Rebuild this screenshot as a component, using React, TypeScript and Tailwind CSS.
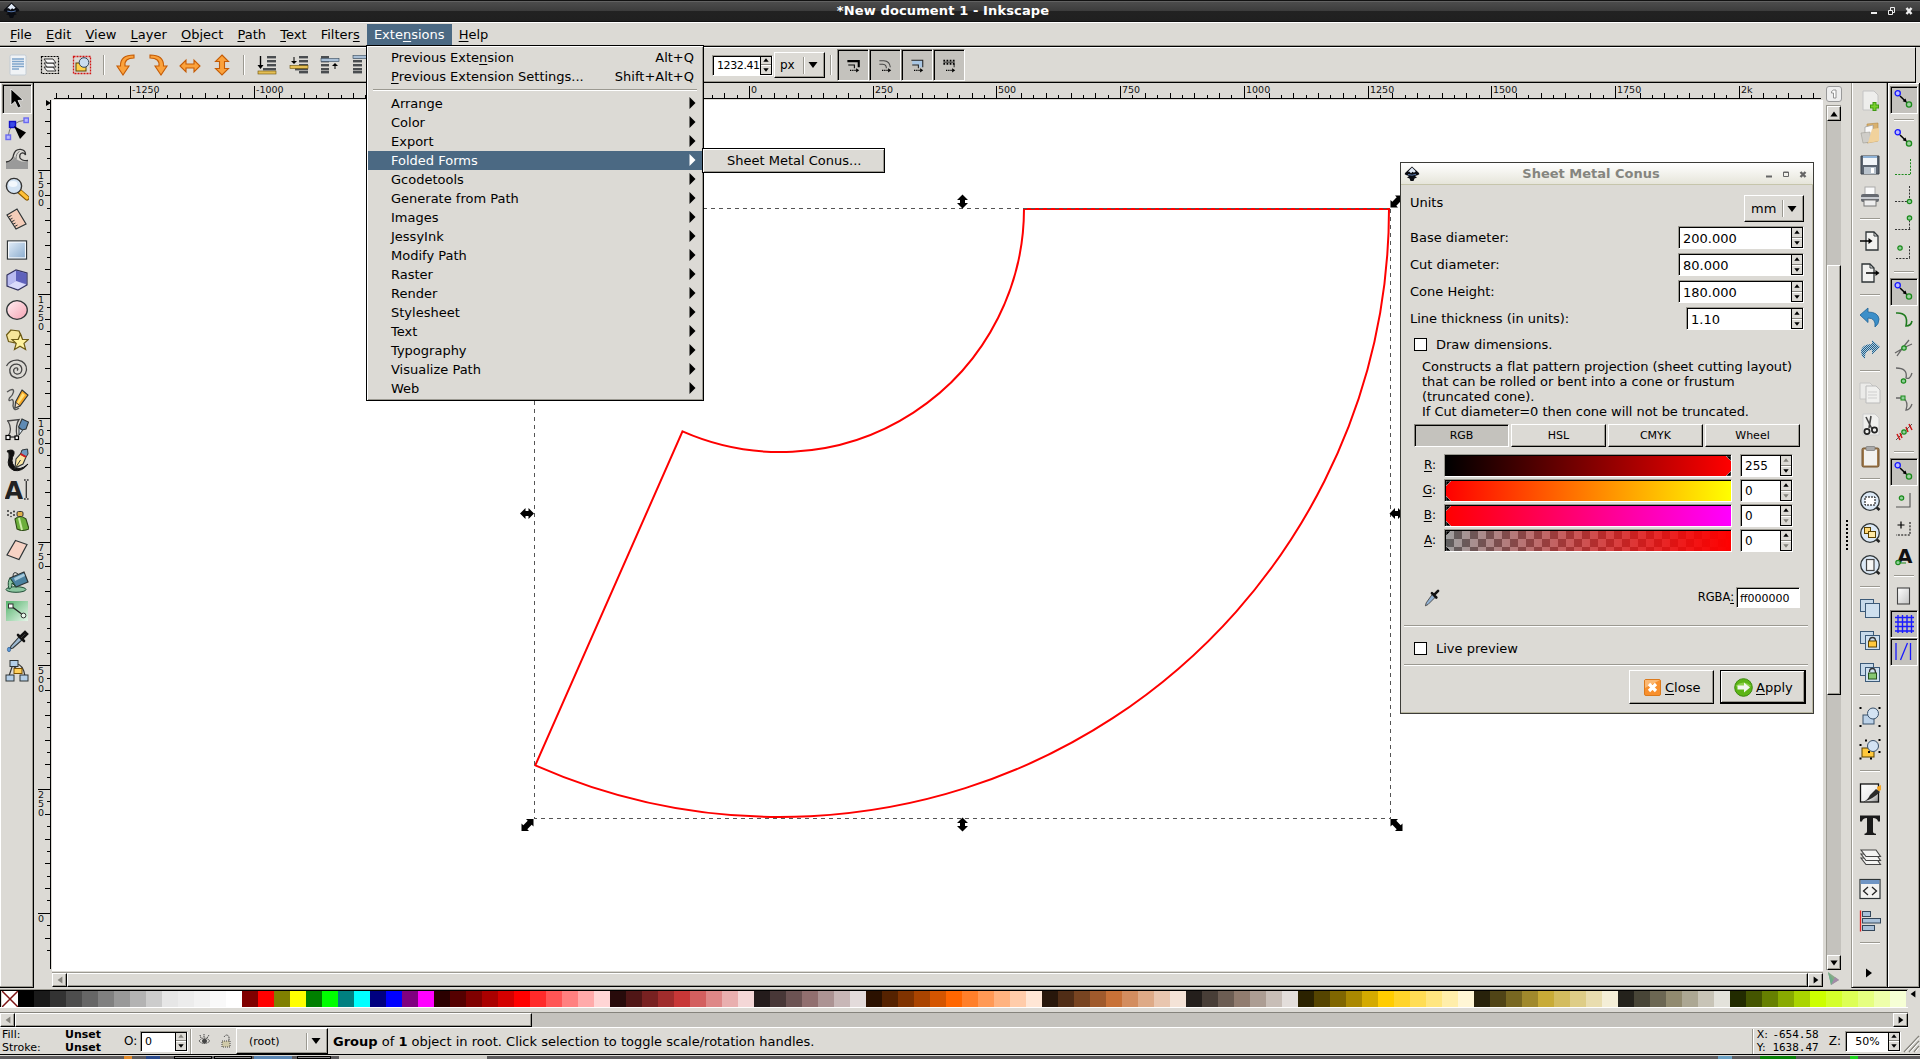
import React from "react";

type Kids = { children?: React.ReactNode };

/* ---------- shared widgets ---------- */

const raised =
  "border border-t-white border-l-white border-b-black border-r-black shadow-[inset_-1px_-1px_0_#9b9991] bg-[#dcdad5]";
const pressed =
  "border border-t-[#85837c] border-l-[#85837c] border-b-white border-r-white shadow-[inset_1px_1px_0_#000] bg-[#c4c2bd]";

function Mn({ t }: { t: string }) {
  const i = t.indexOf("_");
  if (i < 0) return <>{t}</>;
  return (
    <>
      {t.slice(0, i)}
      <span className="underline underline-offset-2 [text-decoration-skip-ink:none] decoration-1">{t[i + 1]}</span>
      {t.slice(i + 2)}
    </>
  );
}

function Tri({ dir, dim, s = 5 }: { dir: "u" | "d" | "l" | "r"; dim?: boolean; s?: number }) {
  const d = {
    u: "M5 2 L9.5 8 H0.5 Z",
    d: "M5 8 L9.5 2 H0.5 Z",
    l: "M2 5 L8 0.5 V9.5 Z",
    r: "M8 5 L2 0.5 V9.5 Z",
  }[dir];
  return (
    <svg width={s} height={s} viewBox="0 0 10 10" className="block shrink-0">
      <path d={d} fill={dim ? "#85837c" : "#000"} />
    </svg>
  );
}

function Spin({
  value,
  cls,
  dimUp,
  dimDown,
  center,
}: {
  value: string;
  cls: string;
  dimUp?: boolean;
  dimDown?: boolean;
  center?: boolean;
}) {
  return (
    <div className={"border border-t-[#9b9991] border-l-[#9b9991] border-b-white border-r-white " + cls}>
      <div className="flex h-full border-t border-l border-black bg-white">
        <div className={"flex min-w-0 flex-1 items-center whitespace-nowrap " + (center ? "justify-center" : "pl-[3px]")}>
          {value}
        </div>
        <div className="flex w-[12px] shrink-0 flex-col border-x border-black bg-[#dcdad5]">
          <div className="flex flex-1 items-center justify-center border-b border-[#85837c]">
            <Tri dir="u" dim={dimUp} s={6} />
          </div>
          <div className="flex flex-1 items-center justify-center border-t border-b border-t-white border-b-black">
            <Tri dir="d" dim={dimDown} s={6} />
          </div>
        </div>
      </div>
    </div>
  );
}

function Combo({ value, cls }: { value: string; cls: string }) {
  return (
    <div className={"flex items-center " + raised + " " + cls}>
      <span className="flex-1 leading-none">{value}</span>
      <span className="mr-[3px] h-[17px] w-[2px] border-l border-r border-l-[#9b9991] border-r-white" />
      <span className="mr-[6px]">
        <Tri dir="d" s={10} />
      </span>
    </div>
  );
}

function Logo({ s }: { s: number }) {
  return (
    <svg width={s} height={s} viewBox="0 0 16 16" className="block shrink-0">
      <path d="M8 0.5 L15 7 Q16 8.6 14 9 L11 10 L13 11.5 L10.5 12.5 L9.5 15 L6.5 15 L5.5 12.5 L3 11.5 L5 10 L2 9 Q0 8.6 1 7 Z" fill="#0a0c12" />
      <path d="M8 1.6 L11.8 5.3 L10 6.8 L8.6 5.8 L7 7.2 L5.6 5.8 L4 5.8 Z" fill="#dfe8f5" />
      <path d="M4 8.5 Q8 10 12 8.3" stroke="#5575a8" fill="none" />
    </svg>
  );
}

function Svg({ children, s = 24 }: Kids & { s?: number }) {
  return (
    <svg width={s} height={s} viewBox="0 0 24 24" fill="none" className="block shrink-0">
      {children}
    </svg>
  );
}

/* ---------- toolbox drawings ---------- */

const K = "#2e3436";
const toolIcons: React.ReactNode[] = [
  <path d="M6 2 L6 18 L10 14.5 L13 21 L16 19.5 L13 13.5 L18 13 Z" fill="#000" stroke="#fff" strokeWidth=".7" />,
  <>
    <path d="M3 20 Q4 4 22 3" stroke="#777" />
    <rect x="1" y="18" width="4.5" height="4.5" fill="#b8b8ff" stroke="#6a6af0" strokeWidth="1.4" />
    <rect x="19" y="1" width="4.5" height="4.5" fill="#b8b8ff" stroke="#6a6af0" strokeWidth="1.4" />
    <rect x="4.5" y="4.5" width="6" height="6" fill="#3a4ae8" stroke="#1212c8" strokeWidth="1.4" />
    <path d="M9 9 L21 15.5 L15 22 Z" fill="#000" />
  </>,
  <>
    <path d="M1 22 V15 Q9 15 9 9 Q10 12 15 14 Q18 15 23 14 V22 Z" fill="#9a9a9a" />
    <path d="M1 15 Q8 14 8.5 8 Q10 2 15.5 2.3 Q21 3 20.5 8 Q19.5 5.5 17 6 Q14 7 15 11 Q17 14 23 13.5" stroke="#333" strokeWidth="1.3" />
    <path d="M11 12 Q11 6 14.5 4.5" stroke="#777" />
  </>,
  <>
    <path d="M14 14 L22 21" stroke="#8a5a00" strokeWidth="5" strokeLinecap="round" />
    <path d="M15.5 15 L22 20.8" stroke="#ffc038" strokeWidth="3.2" strokeLinecap="round" />
    <circle cx="9" cy="9" r="7.6" fill="#d3e3f3" stroke="#333" strokeWidth="1.4" />
    <ellipse cx="8" cy="7" rx="4.5" ry="3" fill="#f3f8fd" />
  </>,
  <>
    <path d="M2 8 L12 2 L21 17 L11 22 Z" fill="#f4cdb9" stroke={K} strokeWidth="1.2" />
    <path d="M3.5 10 L6.5 8.5 M5 12.5 L7.5 11.2 M6.5 14.8 L9.5 13.3 M8 17.2 L10.5 16 M9.5 19.6 L12.5 18" stroke={K} />
  </>,
  <>
    <defs>
      <linearGradient id="gRect" x1="0" y1="0" x2="1" y2="1">
        <stop offset="0" stopColor="#e6f0fa" />
        <stop offset="1" stopColor="#86a9cc" />
      </linearGradient>
    </defs>
    <rect x="2.5" y="3" width="19" height="18" fill="url(#gRect)" stroke={K} strokeWidth="1.3" />
    <rect x="3.6" y="4.1" width="16.8" height="15.8" stroke="#fff" />
  </>,
  <>
    <path d="M2 7 L11 2 L22 5 V17 L13 22 L2 18 Z" fill="#8d8fd6" stroke="#34345e" strokeWidth="1.2" />
    <path d="M2.8 7.4 L11 2.8 V13 L2.8 17.4 Z" fill="#b9bbf0" />
    <path d="M11 2.8 L21.3 5.6 V16 L11 13 Z" fill="#5f62bb" />
    <path d="M11 13 L21 16.6 L13 21.2 L3 17.8 Z" fill="#d9dafa" />
  </>,
  <>
    <defs>
      <linearGradient id="gEl" x1="0" y1="0" x2="1" y2="1">
        <stop offset="0" stopColor="#fff0f3" />
        <stop offset="1" stopColor="#f5a3b3" />
      </linearGradient>
    </defs>
    <ellipse cx="12" cy="12" rx="10.3" ry="9.3" fill="url(#gEl)" stroke={K} strokeWidth="1.3" />
  </>,
  <>
    <path d="M6 2 L14 3 L16.5 9 L11 15 L3.5 13.5 L1.5 7 Z" fill="#f7e69b" stroke="#6d5b16" strokeWidth="1.2" />
    <path d="M15.5 6 L17.5 11.3 L23.3 11.5 L19 15.4 L20.6 21.5 L15 18.2 L9.5 21.5 L11.2 15.4 L7 11.5 L13.2 11.3 Z" fill="#fff3a0" stroke="#6d5b16" strokeWidth="1.2" />
  </>,
  <path d="M12 12.5 Q13.5 11 12.2 10 Q10 9.3 8.8 11.5 Q8 15 11.5 16 Q16 16.5 16.8 12 Q17 7 12 6.2 Q6 6 4.8 11.5 Q4.3 18.5 11.5 20 Q20 20.5 21.5 12 Q21.8 4 13 2.2 Q5 1.6 1.5 8" stroke="#444" strokeWidth="1.3" />,
  <>
    <path d="M2 4 Q9 -1 8.5 4 Q8 7 4.5 10 Q2.5 14 7 11.5 Q9 12 8 18 Q9 24 14 20" stroke="#555" strokeWidth="1.4" />
    <path d="M17 2 L23 7 L15 18 L10 20 L10.5 14 Z" fill="#f6a623" stroke={K} strokeWidth="1.1" />
    <path d="M17.5 5 L20 7 L13.5 16 L12 14.5 Z" fill="#ffe07a" />
    <path d="M11 14.5 L14.8 17.6 L10 20 Z" fill="#f8e2c6" stroke={K} strokeWidth=".8" />
  </>,
  <>
    <path d="M2 3 L14 1.5 Q10 7 12 19 M3 3 Q8 12 3 18 M4 19 H14" stroke="#444" strokeWidth="1.3" />
    <rect x="1" y="17.5" width="4" height="4" fill="#fff" stroke="#000" strokeWidth="1.2" />
    <rect x="10" y="18" width="3.5" height="3.5" fill="#fff" stroke="#000" strokeWidth="1.2" />
    <path d="M17 1 L23.5 4 L21 11 L17 12 L13.5 9 Z" fill="#5f8bb4" stroke={K} strokeWidth="1.1" />
    <path d="M14 10 L17.5 12.5 L14 17 Z" fill="#dce8f2" stroke={K} />
  </>,
  <>
    <path d="M2 3 Q10 0 9 6 Q5 13 9 18 Q14 24 23 16 Q17 24 9 22.5 Q1 19 4 10 Q5 5 2 3 Z" fill="#111" stroke="#111" />
    <path d="M17 2 L22.5 1 L23 6 L21 9 L15.5 6 Z" fill="#6f98c0" stroke={K} />
    <path d="M15.5 6 L21 9 L18 16 L10 20 L11 11 Z" fill="#fbe7a2" stroke={K} strokeWidth="1.1" />
    <path d="M15.5 5.8 L21 9" stroke="#d02020" strokeWidth="2" />
    <path d="M11 19 L15.5 12" stroke={K} />
  </>,
  <>
    <text x="-.5" y="20.5" fontSize="24" fontWeight="bold" fontFamily="DejaVu Sans" fill="#222">A</text>
    <path d="M19 2 H20.7 M21.9 2 H23.6 M21.3 3 V20 M19 21 H20.7 M21.9 21 H23.6" stroke="#333" strokeWidth="1.3" />
  </>,
  <>
    <g fill="#333">
      <circle cx="3" cy="3" r="1" /><circle cx="6" cy="5" r="1" /><circle cx="3" cy="7" r="1" /><circle cx="9" cy="3.5" r="1" /><circle cx="9" cy="7" r="1" /><circle cx="6" cy="8.5" r=".8" />
    </g>
    <path d="M10 11 Q15 6 21 11 L24 21 Q18 24 12 21 Z" fill="#6cae3c" stroke="#2c4a14" strokeWidth="1.1" />
    <path d="M14 10 L17 22" stroke="#cdeaa8" strokeWidth="2" />
    <rect x="12" y="3.5" width="6" height="5" rx="1.5" fill="#e0b04a" stroke="#333" />
  </>,
  <path d="M10.5 2.5 L22 6.5 L14 21.5 L2 17 Z" fill="#f6d2c4" stroke={K} strokeWidth="1.2" />,
  <>
    <ellipse cx="11" cy="20.5" rx="10" ry="2.8" fill="#8cc6a0" stroke="#1f4d36" />
    <path d="M5 9 L19 3 L23 13 L11 18 Z" fill="#4b82a0" stroke={K} strokeWidth="1.2" />
    <path d="M9 9 L19 4.5 L20 7 L10 12 Z" fill="#a6cadd" />
    <path d="M5 9 Q2 13 4 20 Q7 20 7 14 L11 18 Z" fill="#8cc6a0" stroke="#1f4d36" />
    <path d="M8 8 Q8 1 13 5" stroke={K} />
  </>,
  <>
    <defs>
      <linearGradient id="gGr" x1="0" y1="0" x2="1" y2="1">
        <stop offset="0" stopColor="#56b36d" />
        <stop offset="1" stopColor="#e5f6e9" />
      </linearGradient>
    </defs>
    <rect x="1" y="2" width="22" height="20" fill="url(#gGr)" />
    <path d="M6 7 L18 16" stroke="#222" strokeWidth="1.3" />
    <rect x="3.5" y="5" width="4.5" height="4" fill="#fff" stroke="#333" />
    <circle cx="18.5" cy="16.5" r="2.4" fill="#e8f7eb" stroke="#333" />
  </>,
  <>
    <path d="M14 8 L17 11 L8 19 L5 20 L6 17 Z" fill="#9db8d0" stroke={K} strokeWidth="1.1" />
    <path d="M13 6 L19 12 M15 8 L20 3 L22 5 L17 10 Z" stroke="#111" strokeWidth="2.6" strokeLinecap="round" />
    <ellipse cx="4" cy="20.5" rx="1.6" ry="2.2" fill="#5b97d6" stroke="#2b5b90" strokeWidth=".7" />
  </>,
  <>
    <path d="M8 5 L4 17 M11 5 Q18 5 20 17 M8 7 L12 10" stroke="#333" strokeWidth="1.2" />
    <rect x="5" y="1.5" width="8" height="6" fill="#b4cfe8" stroke={K} />
    <rect x="1" y="16" width="8" height="6" fill="#b4cfe8" stroke={K} />
    <rect x="15" y="16" width="8" height="6" fill="#b4cfe8" stroke={K} />
    <rect x="9" y="9.5" width="8" height="5" fill="#ffcf5a" stroke="#7c5200" />
  </>,
];

/* ---------- command bar drawings ---------- */

const pageOut = <path d="M5 2 H16 L20 6 V21 H5 Z" fill="#eeeeec" stroke="#c4c4c4" />;
const twoRects = (
  <>
    <rect x="2.5" y="2.5" width="13" height="12" fill="#c8daea" stroke="#3c5a78" />
    <rect x="7.5" y="6.5" width="14" height="14" fill="#cfe0ef" stroke="#3c5a78" />
  </>
);
const zoomBase = (
  <>
    <path d="M17 17 L21.5 21" stroke="#222" strokeWidth="2.6" />
    <circle cx="12" cy="12" r="9.3" fill="#dce9f6" stroke={K} strokeWidth="1.3" />
  </>
);

const cmdGroups: React.ReactNode[][] = [
  [
    <>
      {pageOut}
      <path d="M16.5 13 V22 M12 17.5 H21" stroke="#3f9a10" strokeWidth="4" />
      <path d="M16.5 14 V21 M13 17.5 H20" stroke="#7ad02e" strokeWidth="2" />
    </>,
    <>
      <path d="M9 3 L20 2 V20 L9 22 Z" fill="#d9b16e" stroke="#b58a45" strokeWidth=".6" />
      <path d="M7 6 L15 4 V19 L7 21 Z" fill="#fafafa" stroke="#999" strokeWidth=".7" />
      <path d="M3 12 L12 11 L13 21 L5 22 Z" fill="#cfcdc8" stroke="#a09d96" strokeWidth=".6" />
      <path d="M14 8 L21 7 V20 L10 22 Z" fill="#f1d29c" />
    </>,
    <>
      <path d="M3 3 H21 V21 H3 Z" fill="#5b6470" stroke="#3b424c" />
      <rect x="5" y="3" width="14" height="9" fill="#f2f5f8" />
      <rect x="5" y="3" width="14" height="2" fill="#8fb2d6" />
      <rect x="6" y="14" width="12" height="7" fill="#b9c3cd" />
      <rect x="13" y="15" width="3" height="5" fill="#fff" />
    </>,
    <>
      <rect x="7" y="2" width="10" height="9" fill="#fafafa" stroke="#aaa" />
      <rect x="3" y="9" width="18" height="8" rx="2" fill="#666a70" />
      <rect x="3" y="12" width="18" height="2" fill="#c8cbd0" />
      <rect x="6" y="15" width="12" height="6" fill="#eee" stroke="#777" />
    </>,
  ],
  [
    <>
      <path d="M8 3 H16 L20 7 V21 H8 Z" fill="#f2f2f0" stroke={K} strokeWidth="1.3" />
      <path d="M16 3 V7 H20" stroke={K} />
      <path d="M2 12 H12" stroke="#000" strokeWidth="1.5" />
      <path d="M10.5 9 L14.5 12 L10.5 15 Z" fill="#000" />
    </>,
    <>
      <path d="M4 3 H12 L16 7 V21 H4 Z" fill="#f2f2f0" stroke={K} strokeWidth="1.3" />
      <path d="M12 3 V7 H16" stroke={K} />
      <path d="M8 12 H18" stroke="#000" strokeWidth="1.5" />
      <path d="M17.5 9 L21.5 12 L17.5 15 Z" fill="#000" />
    </>,
  ],
  [
    <path d="M2 10 L10 3 V7 Q20 7 21 14 Q21 19 17 22 Q18 13 10 13 V17.5 Z" fill="#3c8fc9" stroke="#1f6296" strokeWidth=".8" />,
    <>
      <defs>
        <pattern id="dith" width="2" height="2" patternUnits="userSpaceOnUse">
          <rect width="1" height="1" fill="#275f86" />
          <rect x="1" y="1" width="1" height="1" fill="#275f86" />
          <rect x="1" width="1" height="1" fill="#a9cbe0" />
          <rect y="1" width="1" height="1" fill="#a9cbe0" />
        </pattern>
      </defs>
      <path d="M22 10 L14 3 V7 Q4 7 3 14 Q3 19 7 22 Q6 13 14 13 V17.5 Z" fill="url(#dith)" />
    </>,
  ],
  [
    <>
      <path d="M2 2 H12 L15 5 V18 H2 Z" fill="#ebebe9" stroke="#c6c6c4" />
      <path d="M8 5 H18 L22 9 V22 H8 Z" fill="#f0f0ee" stroke="#bbb" />
      <path d="M10 11 H19 M10 14 H19 M10 17 H19" stroke="#cfcfcf" />
    </>,
    <>
      <path d="M5 1 H17 L21 5 V22 H5 Z" fill="#f0f0ee" stroke="#ccc" />
      <path d="M8 4 L14 16 M13 3 L11 15" stroke="#444" strokeWidth="1.6" />
      <circle cx="9" cy="18.5" r="2.6" stroke="#222" strokeWidth="1.7" />
      <circle cx="16.5" cy="17" r="2.6" stroke="#222" strokeWidth="1.7" />
    </>,
    <>
      <rect x="4" y="3" width="17" height="19" rx="1.5" fill="#a17b4d" stroke="#70532f" />
      <rect x="6" y="4.5" width="13" height="16" fill="#f2f2f0" />
      <rect x="8" y="1.5" width="9" height="4" rx="1" fill="#aaa" stroke="#777" strokeWidth=".7" />
    </>,
  ],
  [
    <>
      {zoomBase}
      <rect x="7" y="8" width="10" height="8" stroke="#000" strokeDasharray="2 1" fill="#fff" />
    </>,
    <>
      {zoomBase}
      <rect x="6.5" y="6.5" width="6" height="6" fill="#ffd977" stroke="#5b4200" />
      <rect x="10.5" y="10.5" width="7" height="6" fill="#ffe9a5" stroke="#5b4200" />
    </>,
    <>
      {zoomBase}
      <rect x="8.5" y="6.5" width="7.5" height="11" fill="#f7f7f5" stroke="#444" strokeWidth="1.2" />
    </>,
  ],
  [
    twoRects,
    <>
      {twoRects}
      <path d="M11.5 12 Q11.5 8.5 14.5 8.5 Q17.5 8.5 17.5 12" stroke="#333" strokeWidth="1.3" />
      <rect x="10.5" y="12" width="8" height="6" fill="#ffc83c" stroke="#5b4200" />
    </>,
    <>
      {twoRects}
      <path d="M11.5 11 Q11.5 7.5 14.5 7.5 Q17.5 7.5 17.5 12" stroke="#333" strokeWidth="1.3" />
      <rect x="10.5" y="12" width="8" height="6" fill="#86c770" stroke="#25501a" />
    </>,
  ],
  [
    <>
      <rect x="5" y="10" width="11" height="9" fill="#bcd2e8" stroke="#38506a" />
      <circle cx="15" cy="8.5" r="5.5" fill="#d3e3f3" stroke="#38506a" />
      <path d="M1.5 2 H3.5 V4 H1.5Z M20.5 2 H22.5 V4 H20.5Z M1.5 20 H3.5 V22 H1.5Z M20.5 20 H22.5 V22 H20.5Z" fill="#000" />
    </>,
    <>
      <rect x="4" y="11" width="12" height="9" fill="#ffc83c" stroke="#5b4200" />
      <circle cx="15" cy="9" r="5.5" fill="#d3e3f3" stroke="#38506a" />
      <path d="M1.5 7 H3.5 V9 H1.5Z M7 2.5 H9 V4.5 H7Z M20.5 2 H22.5 V4 H20.5Z M1.5 20.5 H3.5 V22.5 H1.5Z M10 14 H12 V16 H10Z M20.5 14 H22.5 V16 H20.5Z M12 20.5 H14 V22.5 H12Z" fill="#000" />
    </>,
  ],
  [
    <>
      <defs>
        <linearGradient id="gFs" x1="0" y1="0" x2="1" y2="1">
          <stop offset="0" stopColor="#fff" />
          <stop offset=".6" stopColor="#eee" />
          <stop offset="1" stopColor="#888" />
        </linearGradient>
      </defs>
      <rect x="2.5" y="3" width="18" height="18" fill="url(#gFs)" stroke="#111" strokeWidth="1.3" />
      <path d="M19 6 L23 4 V9 L20 11 Z" fill="#f5a623" />
      <path d="M18 8 L22 11 Q15 18 5 21 Q10 19 12 14 Z" fill="#2a2a2a" />
    </>,
    <path d="M2 2.5 H22 V8.5 H20 Q19.5 5 15 5 V18.5 Q15 20.5 18 20.8 V22 H6.5 V20.8 Q9 20.5 9 18.5 V5 Q4.5 5 4 8.5 H2 Z" fill="#1a1a1a" />,
    <g stroke="#444" strokeWidth="1.1" fill="#f4f4f2">
      <path d="M3 13 H18 L22.5 19.5 H8 Z" />
      <path d="M3 9 H18 L22.5 15.5 H8 Z" />
      <path d="M3 5 H18 L22.5 11.5 H8 Z" />
    </g>,
    <>
      <rect x="2" y="2.5" width="20" height="19" fill="#f2f2f0" stroke={K} strokeWidth="1.2" />
      <rect x="2.6" y="3" width="18.8" height="4" fill="#6f95c4" />
      <path d="M10 10 L5.5 14 L10 18 M14 10 L18.5 14 L14 18" stroke="#222" strokeWidth="1.3" />
    </>,
    <>
      <path d="M2.5 1.5 V22.5" stroke="#e02020" strokeWidth="1.3" />
      <rect x="4.5" y="2.5" width="8" height="5" fill="#a9c0d8" stroke="#33465a" />
      <rect x="4.5" y="9.5" width="18" height="4.5" fill="#a9c0d8" stroke="#33465a" />
      <rect x="4.5" y="16.5" width="12" height="5" fill="#a9c0d8" stroke="#33465a" />
    </>,
  ],
];

/* ---------- snap bar drawings ---------- */

const G = "#1b8a1b";
const snapMain = (
  <>
    <circle cx="5.7" cy="5.3" r="2.6" fill="#b9b9ff" stroke="#1515ff" strokeWidth="1.3" />
    <circle cx="17" cy="16.5" r="2.6" fill="#9fd0a0" stroke={G} strokeWidth="1.3" />
    <path d="M8 8 L13 12.8" stroke="#000" strokeWidth="1.5" />
    <path d="M15 14.8 L10.7 13.3 L13.5 10.6 Z" fill="#000" />
  </>
);
const dotN = (x: number, y: number) => <circle cx={x} cy={y} r="2.2" fill="#8fd09a" stroke={G} strokeWidth="1.2" />;
const snapGroups: { on?: boolean; g: React.ReactNode }[][] = [
  [{ on: true, g: snapMain }],
  [
    { g: snapMain },
    { g: <path d="M18.5 4 V19 M3 19.5 H19" stroke={G} strokeDasharray="2 1.3" /> },
    { g: <><path d="M17.5 3 V19 M3 18.5 H19" stroke="#333" strokeDasharray="2 1.3" />{dotN(17.5, 18.5)}</> },
    { g: <><path d="M17.5 6 V19 M3 18.5 H19" stroke="#333" strokeDasharray="2 1.3" />{dotN(17.5, 7)}</> },
    { g: <><path d="M17.5 7 V20 M4 19.5 H18" stroke="#333" strokeDasharray="2 1.3" />{dotN(8, 9)}</> },
  ],
  [
    { on: true, g: snapMain },
    { g: <path d="M4 5 Q17 4 14 18 Q19 18 20 13" stroke="#1f7a1f" strokeWidth="1.6" /> },
    { g: <><path d="M3 17 Q12 11 20 8 M5 20 Q10 12 17 4" stroke="#666" strokeWidth="1.3" />{dotN(12, 12)}</> },
    { g: <><path d="M4 4 Q16 4 14 14 Q18 16 20 9" stroke="#666" strokeWidth="1.3" />{dotN(11.5, 17)}</> },
    { g: <><path d="M4 6 H11 Q17 10 14 18 Q18 18 20 12" stroke="#666" strokeWidth="1.3" /><rect x="9" y="4" width="4" height="4" fill="#8fd09a" stroke={G} /></> },
    { g: <><path d="M4 20 L20 4" stroke="#555" /><path d="M5 14 L8 20 M8 13 L10 18 M14 7 L16 12 M17 4 L20 10" stroke="#cc1818" strokeWidth="1.5" />{dotN(12, 12)}</> },
  ],
  [
    { on: true, g: snapMain },
    { g: <><path d="M18 5 V19 H4" stroke="#555" strokeWidth="1.1" />{dotN(9.5, 10)}</> },
    { g: <><path d="M18 6 V19 H4" stroke="#000" strokeDasharray="2 1.3" /><path d="M9 5.5 V12.5 M5.5 9 H12.5" stroke="#000" strokeWidth="1.2" /></> },
    { g: <><text x="5" y="18.5" fontSize="20" fontWeight="bold" fontFamily="DejaVu Sans" fill="#111">A</text><path d="M4 19 H14" stroke={G} />{dotN(6, 18.5)}</> },
  ],
  [
    { g: <><defs><linearGradient id="gPg" x1="0" y1="0" x2="1" y2="1"><stop offset="0" stopColor="#fff" /><stop offset="1" stopColor="#c4c4c4" /></linearGradient></defs><rect x="5.5" y="4" width="12" height="16" fill="url(#gPg)" stroke="#444" strokeWidth="1.1" /></> },
    { on: true, g: <path d="M6 3 V21 M10.5 3 V21 M15 3 V21 M19.5 3 V21 M3 5.5 H22 M3 10 H22 M3 14.5 H22 M3 19 H22" stroke="#1a1aff" strokeWidth="1.4" /> },
    { on: true, g: <path d="M4 3 V20 M18.5 3 V20 M8.5 20 L15.5 3" stroke="#1a1aff" strokeWidth="1.3" /> },
  ],
];
const snapGap = ["", "h-[11px]", "h-[13px]", "h-[12px]", "h-[11.6px]"];

/* ---------- option bar drawings ---------- */

const arrowFill = { fill: "#fba23c", stroke: "#c55c06", strokeWidth: 1.1 };
const levelIcon = (mode: number) => (
  <>
    {[2, 6, 10, 14].map((y, i) => (
      <rect key={y} x={mode < 2 ? 13 - (i === 3 ? 4 : 0) : 3} y={y + 1} width={mode < 2 ? 9 + (i === 3 ? 4 : 0) : mode === 2 ? 8 : 9} height="2.4" fill="#4a4d50" />
    ))}
    {mode === 0 && (<><rect x="4" y="18" width="18" height="3" fill="#e5bf55" stroke="#6b5208" strokeWidth=".6" /><path d="M6.5 3 V13" stroke="#000" strokeWidth="1.4" /><path d="M3.5 12 H9.5 L6.5 16 Z" fill="#000" /></>)}
    {mode === 1 && (<><rect x="4" y="12.5" width="18" height="3" fill="#e5bf55" stroke="#6b5208" strokeWidth=".6" /><rect x="13" y="18" width="9" height="2.4" fill="#4a4d50" /><path d="M8 4 V9" stroke="#000" /><path d="M5 8 H11 L8 11 Z" fill="#000" /></>)}
    {mode === 2 && (<><rect x="3" y="5.5" width="18" height="3" fill="#a9bfd6" stroke="#33465a" strokeWidth=".6" /><rect x="3" y="18" width="8" height="2.4" fill="#4a4d50" /><path d="M17 16 V12" stroke="#000" /><path d="M14 13 H20 L17 10 Z" fill="#000" /></>)}
    {mode === 3 && (<><rect x="3" y="2.5" width="18" height="3" fill="#a9bfd6" stroke="#33465a" strokeWidth=".6" /><rect x="3" y="18" width="9" height="2.4" fill="#4a4d50" /></>)}
  </>
);

const optGroups: React.ReactNode[][] = [
  [
    <>
      <rect x="4" y="2" width="16" height="20" rx="1.5" fill="#f0f3f6" stroke="#c3ccd5" />
      <path d="M6 6 H18 M6 8.5 H18 M6 11 H18 M6 13.5 H18 M6 16 H13" stroke="#7fa5cb" strokeWidth="1.6" />
    </>,
    <>
      <rect x="3.5" y="3.5" width="17" height="17" fill="none" stroke="#000" strokeDasharray="2 1" strokeWidth="1.2" />
      <g stroke="#333" fill="#fafafa"><path d="M6 14 H15 L18 18 H9 Z" /><path d="M6 10 H15 L18 14 H9 Z" /><path d="M6 6 H15 L18 10 H9 Z" /></g>
    </>,
    <>
      <rect x="3.5" y="3.5" width="17" height="17" stroke="#d21414" strokeDasharray="2 1" strokeWidth="1.3" />
      <rect x="6" y="10" width="10" height="8" fill="#ffd24a" stroke="#5b4200" />
      <circle cx="14" cy="9.5" r="4.8" fill="#c9dcef" stroke="#33465a" />
    </>,
  ],
  [
    <path d="M20 2 Q6 2 6.5 13 H3 L9 22 L15 13 H11 Q10 5 20 5 Z" {...arrowFill} />,
    <path d="M4 2 Q18 2 17.5 13 H21 L15 22 L9 13 H13 Q14 5 4 5 Z" {...arrowFill} />,
    <path d="M2 13 L8 7 V11 H16 V7 L22 13 L16 19 V15 H8 V19 Z" {...arrowFill} />,
    <path d="M12 2 L18.5 8.5 H14.5 V15.5 H18.5 L12 22 L5.5 15.5 H9.5 V8.5 H5.5 Z" {...arrowFill} />,
  ],
  [levelIcon(0), levelIcon(1), levelIcon(2), levelIcon(3)],
];

const dashArrow = (
  <>
    <path d="M8 17.5 H15" stroke="#000" strokeDasharray="1.5 1" strokeWidth="1.3" />
    <path d="M15 15 L18.5 17.5 L15 20 Z" fill="#000" />
  </>
);
const affect: React.ReactNode[] = [
  <><path d="M5 7 H18 V14" stroke="#000" strokeWidth="2.4" /><path d="M6 11.5 H13 V15" stroke="#000" strokeWidth="1.2" />{dashArrow}</>,
  <><path d="M5 6.5 H10 Q17 7 17.5 14 M5 10.5 H9 Q13 11 13 15" stroke="#444" strokeWidth="1.2" />{dashArrow}</>,
  <><path d="M6 6 H18 V14 H13 V11 H6 Z" fill="#a9c6e3" /><path d="M5 6 H18 V14 M6 11.5 H13 V15" stroke="#222" strokeWidth="1.2" />{dashArrow}</>,
  <><path d="M5 6.5 H18.5 M5 10 H18.5" stroke="#000" strokeDasharray="2 1.6" strokeWidth="2" /><path d="M5 8.2 H18 M17.3 10 V14" stroke="#000" strokeWidth=".9" />{dashArrow}</>,
];

/* ---------- data ---------- */

const menus = ["_File", "_Edit", "_View", "_Layer", "_Object", "_Path", "_Text", "Filter_s", "Exte_nsions", "_Help"];
const extItems = ["Arrange", "Color", "Export", "Folded Forms", "Gcodetools", "Generate from Path", "Images", "JessyInk", "Modify Path", "Raster", "Render", "Stylesheet", "Text", "Typography", "Visualize Path", "Web"];
const palette = (
  "000000 1a1a1a 333333 4d4d4d 666666 808080 999999 b3b3b3 cccccc e6e6e6 ececec f2f2f2 f9f9f9 ffffff " +
  "800000 ff0000 808000 ffff00 008000 00ff00 008080 00ffff 000080 0000ff 800080 ff00ff " +
  "2b0000 550000 800000 aa0000 d40000 ff0000 ff2a2a ff5555 ff8080 ffaaaa ffd5d5 " +
  "280b0b 501616 782121 a02c2c c83737 d35f5f de8787 e9afaf f4d7d7 241c1c 483737 6c5353 916f6f ac9393 c8b7b7 e3dbdb " +
  "2b1100 552200 803300 aa4400 d45500 ff6600 ff7f2a ff9955 ffb380 ffccaa ffe6d5 " +
  "28170b 502d16 784421 a05a2c c87137 d38d5f deaa87 e9c6af f4e3d7 241f1c 483e37 6c5d53 917c6f ac9d93 c8beb7 e3dedb " +
  "2b2200 554400 806600 aa8800 d4aa00 ffcc00 ffd42a ffdd55 ffe680 ffeeaa fff6d5 " +
  "28220b 504416 786721 a0892c c8ab37 d3bc5f decd87 e9ddaf f4eed7 24221c 484537 6c6753 918a6f aca793 c8c4b7 e3e2db " +
  "222b00 445500 668000 88aa00 aad400 ccff00 d4ff2a ddff55 e5ff80 eeffaa f6ffd5"
).split(" ");

/* ---------- rulers and canvas ---------- */

function HRuler() {
  const ticks: React.ReactNode[] = [];
  for (let n = -60; n <= 90; n++) {
    const x = Math.floor(749.4 + n * 12.372) - 34;
    if (x < 20 || x > 1786) continue;
    const major = n % 10 === 0;
    const top = major ? 3 : n % 2 === 0 ? 10 : 12;
    ticks.push(<rect key={n} x={x} y={top} width="1" height={15 - top} fill="#000" />);
    if (major)
      ticks.push(
        <text key={"t" + n} x={x + 2} y="10" fontSize="9.5" fontFamily="DejaVu Sans" fill="#111">
          {n === 80 ? "2k" : n * 25}
        </text>
      );
  }
  return (
    <svg width="1789" height="17" className="block shrink-0">
      <rect x="20" y="15" width="1767" height="1" fill="#000" />
      {ticks}
    </svg>
  );
}

function VRuler() {
  const ticks: React.ReactNode[] = [];
  for (let n = -3; n <= 70; n++) {
    const y = Math.floor(913.3 - n * 12.372) - 100;
    if (y < 3 || y > 868) continue;
    const major = n % 10 === 0;
    const left = major ? 4 : n % 2 === 0 ? 11 : 13;
    ticks.push(<rect key={n} x={left} y={y} width={16 - left} height="1" fill="#000" />);
    if (major)
      String(n * 25).split("").forEach((c, i) =>
        ticks.push(
          <text key={n + "d" + i} x="4" y={y + 9 + i * 9} fontSize="9.5" fontFamily="DejaVu Sans" fill="#111">
            {c}
          </text>
        )
      );
  }
  return (
    <svg width="18" height="871" className="block shrink-0">
      <rect x="16" y="0" width="1" height="869" fill="#000" />
      <path d="M12 0 L17 3 L12 6 Z" fill="#000" />
      {ticks}
    </svg>
  );
}

/* Straight double arrow for edge midpoints. */
function EdgeHandle({ x, y, r }: { x: number; y: number; r: number }) {
  return (
    <path
      transform={`translate(${x} ${y}) rotate(${r})`}
      d="M0 -7 L5.5 -1.5 H2.5 V1.5 H5.5 L0 7 L-5.5 1.5 H-2.5 V-1.5 H-5.5 Z"
      fill="#000"
    />
  );
}

/* Diagonal double arrow for corners. */
function CornerHandle({ x, y, flip }: { x: number; y: number; flip?: boolean }) {
  return (
    <path
      transform={`translate(${x} ${y}) scale(${flip ? -1 : 1} 1)`}
      d="M-6 -6 H1.5 L-0.2 -4.2 L4.2 0.2 L6 -1.5 V6 H-1.5 L0.2 4.2 L-4.2 -0.2 L-6 1.5 Z"
      fill="#000"
    />
  );
}

function Drawing() {
  return (
    <svg width="1771" height="871" viewBox="52 100 1771 871" className="block bg-white">
      <path
        d="M1024 209 H1389 A608.5 608.5 0 0 1 535.3 765.3 L682.5 431.4 A243.4 243.4 0 0 0 1024 209 Z"
        fill="none"
        stroke="#fe0000"
        strokeWidth="2"
      />
      <rect x="534.5" y="208.5" width="856" height="610" fill="none" stroke="#555" strokeDasharray="4 4" shapeRendering="crispEdges" />
      <EdgeHandle x={962.5} y={201.5} r={0} />
      <EdgeHandle x={962.5} y={824.5} r={0} />
      <EdgeHandle x={527} y={513.5} r={90} />
      <EdgeHandle x={1396.5} y={513.5} r={90} />
      <CornerHandle x={527.5} y={825} flip />
      <CornerHandle x={1396.5} y={825} />
      <CornerHandle x={1396.5} y={201.5} flip />
    </svg>
  );
}

/* ---------- overlays ---------- */

function ExtensionsMenu() {
  return (
    <div className="absolute left-[366px] top-[45px] z-20 h-[356px] w-[338px] border border-black bg-[#dcdad5] shadow-[inset_1px_1px_0_#fff,inset_-1px_-1px_0_#9b9991]">
      <div className="flex h-full flex-col px-px pt-[2px]">
        {[["Previous Exte_nsion", "Alt+Q"], ["_Previous Extension Settings...", "Shift+Alt+Q"]].map(([a, b]) => (
          <div key={a} className="flex h-[19px] items-center justify-between pl-[23px] pr-[8px]">
            <span><Mn t={a} /></span>
            <span>{b}</span>
          </div>
        ))}
        <div className="flex h-[8px] items-center px-[5px]">
          <div className="h-[2px] flex-1 border-b border-t border-b-white border-t-[#9b9991]" />
        </div>
        {extItems.map((t) => (
          <div
            key={t}
            className={"flex h-[19px] items-center justify-between pl-[23px] pr-[6px] " + (t === "Folded Forms" ? "bg-[#4b6983] text-white" : "")}
          >
            <span>{t}</span>
            <svg width="7" height="12" className="mb-[2px] block"><path d="M0.5 0 L6.5 6 L0.5 12 Z" fill={t === "Folded Forms" ? "#fff" : "#000"} /></svg>
          </div>
        ))}
      </div>
    </div>
  );
}

function Field({ label, value, w }: { label: string; value: string; w: string }) {
  return (
    <div className="flex h-[27px] items-center justify-between">
      <span>{label}</span>
      <Spin value={value} cls={"h-[23px] " + w} />
    </div>
  );
}

function Slider({ label, value, bar, end }: { label: string; value: string; bar: string; end?: boolean }) {
  return (
    <div className="flex h-[25px] items-start text-[12px]">
      <span className="flex h-[22px] w-[32px] items-center justify-end"><span><Mn t={label} /></span></span>
      <div className="ml-[8px] h-[23px] w-[288px] border border-b-white border-l-[#9b9991] border-r-white border-t-[#9b9991]">
        <div className={"relative h-full border-l border-t border-black " + bar}>
          <svg width="6" height="20" className={"absolute top-0 " + (end ? "right-0 -scale-x-100" : "left-0")}>
            <path d="M0 0 H5 L0 5 Z M0 20 H5 L0 15 Z" fill="#000" stroke="#ddd" strokeWidth=".5" />
          </svg>
        </div>
      </div>
      <Spin value={value} cls="ml-[8px] h-[23px] w-[53px]" dimUp={end} dimDown={!end} />
    </div>
  );
}

function Check({ label }: { label: string }) {
  return (
    <div className="flex items-center gap-[9px]">
      <span className="h-[13px] w-[13px] border border-black bg-white" />
      <span>{label}</span>
    </div>
  );
}

function Dialog() {
  return (
    <div className="absolute left-[1400px] top-[162px] z-10 flex h-[552px] w-[414px] flex-col border border-[#3c3c38] bg-[#dcdad5]">
      <div className="flex h-[22px] shrink-0 items-center border-b border-[#c6c5ab] bg-linear-to-b from-white to-[#e6e5da] pl-[3px] pr-[6px]">
        <Logo s={16} />
        <span className="flex-1 pb-px pr-[3px] text-center font-bold text-[#85857f]">Sheet Metal Conus</span>
        <svg width="42" height="10" className="block" stroke="#666" fill="none">
          <path d="M1 7.5 H7" strokeWidth="2" />
          <path d="M18.5 3 H23.5 V7.5 H18.5 Z M18 3.5 H24" />
          <path d="M35.5 3 L40.5 8 M40.5 3 L35.5 8" strokeWidth="2.4" />
        </svg>
      </div>
      <div className="flex flex-1 flex-col border-b border-r border-[#b8b6a0] pl-[9px] pr-[8px]">
        <div className="flex h-[39px] items-start justify-between pt-[10px]">
          <span className="pt-px">Units</span>
          <Combo value="mm" cls="h-[27px] w-[60px] pl-[6px]" />
        </div>
        <Field label="Base diameter:" value="200.000" w="w-[126px]" />
        <Field label="Cut diameter:" value="80.000" w="w-[126px]" />
        <Field label="Cone Height:" value="180.000" w="w-[126px]" />
        <Field label="Line thickness (in units):" value="1.10" w="w-[118px]" />
        <div className="pl-[4px] pt-[6px]"><Check label="Draw dimensions." /></div>
        <p className="whitespace-nowrap pl-[12px] pt-[8px] leading-[15px] tracking-[-0.05px]">
          Constructs a flat pattern projection (sheet cutting layout)
          <br />that can be rolled or bent into a cone or frustum
          <br />(truncated cone).
          <br />If Cut diameter=0 then cone will not be truncated.
        </p>
        <div className="mt-[5px] flex gap-[2px] pl-[4px] text-[11px]">
          {["RGB", "HSL", "CMYK", "Wheel"].map((t, i) => (
            <div key={t} className={"flex h-[23px] w-[95px] items-center justify-center " + (i ? raised : pressed)}>{t}</div>
          ))}
        </div>
        <div className="mt-[7px] -ml-[6px]">
          <Slider label="_R:" value="255" end bar="bg-[linear-gradient(to_right,#000,#f00)]" />
          <Slider label="_G:" value="0" bar="bg-[linear-gradient(to_right,#f00,#ff0)]" />
          <Slider label="_B:" value="0" bar="bg-[linear-gradient(to_right,#f00,#f0f)]" />
          <Slider label="_A:" value="0" bar="bg-[linear-gradient(to_right,rgba(255,0,0,0),#f00),repeating-conic-gradient(#5f5f5f_0_25%,#9f9f9f_0_50%)] [background-size:100%_100%,16px_16px]" />
        </div>
        <div className="mt-[33px] flex h-[21px] items-center pl-[11px] pr-[4px] text-[11px]">
          <Svg s={21}>
            <path d="M13.5 7.5 L17 11 L8 20 L5 21.5 L6 18 Z" fill="#90b0d2" stroke="#444" />
            <path d="M12.5 7 L17.5 12 M15 9 L19.5 4.5" stroke="#111" strokeWidth="3" strokeLinecap="round" />
          </Svg>
          <span className="ml-auto mr-[2px] text-[11.5px]"><Mn t="RGBA_:" /></span>
          <div className="flex h-[21px] w-[64px] items-center border border-b-white border-l-[#9b9991] border-r-white border-t-[#9b9991]">
            <div className="flex h-full flex-1 items-center border-l border-t border-black bg-white pl-[2px]">ff000000</div>
          </div>
        </div>
        <div className="-ml-[6px] -mr-[4px] mt-[17px] h-[2px] border-b border-t border-b-white border-t-[#9b9991]" />
        <div className="flex h-[37px] items-center pl-[4px] pt-[5px]"><Check label="Live preview" /></div>
        <div className="-ml-[6px] -mr-[4px] h-[2px] border-b border-t border-b-white border-t-[#9b9991]" />
        <div className="flex justify-end gap-[6px] pt-[4px]">
          <div className={"flex h-[34px] w-[85px] items-center pl-[14px] " + raised}>
            <svg width="17" height="17" viewBox="0 0 17 17" className="mr-[4px]">
              <rect x=".5" y=".5" width="16" height="16" rx="1.5" fill="#f8902e" stroke="#dc7a1c" />
              <path d="M1 1 H16 L1 9 Z" fill="#fbb873" />
              <path d="M5 5 L12 12 M12 5 L5 12" stroke="#fff" strokeWidth="3.2" />
            </svg>
            <span><Mn t="_Close" /></span>
          </div>
          <div className="-mr-[2px] h-[34px] w-[86px] border border-r-2 border-b-2 border-black">
            <div className="flex h-full items-center border-l border-t border-white pl-[12px] shadow-[inset_-1px_-1px_0_#9b9991]">
              <svg width="19" height="19" viewBox="0 0 19 19" className="mr-[3px]">
                <circle cx="9.5" cy="9.5" r="8.8" fill="#5cb416" stroke="#3b8a0c" />
                <path d="M1.5 8 Q9 1 17.5 8 Q9 11 1.5 8Z" fill="#8bd048" />
                <path d="M3.5 7.5 H10 V4.5 L16 9.5 L10 14.5 V11.5 H3.5 Z" fill="#f2f6ee" />
              </svg>
              <span><Mn t="_Apply" /></span>
            </div>
          </div>
        </div>
      </div>
    </div>
  );
}

const HSep = () => <div className="h-[2px] w-[20px] border-b border-t border-b-white border-t-[#9b9991]" />;

/* ---------- main window ---------- */

export default function App() {
  return (
    <div className="relative flex h-[1059px] w-[1920px] flex-col overflow-hidden bg-[#dcdad5] font-['DejaVu_Sans',sans-serif] text-[13px] leading-none text-black">
      <header className="flex h-[22px] shrink-0 items-center border-b border-[#111] bg-[linear-gradient(#111_0,#111_1px,#777_1px,#4c4c4c_2px,#3c3c3c_11px,#222_11px,#202020_100%)] pl-[3px] pr-[4px]">
        <Logo s={17} />
        <span className="flex-1 pr-[4px] text-center font-bold tracking-[0.12px] text-white">*New document 1 - Inkscape</span>
        <svg width="46" height="12" className="block" stroke="#eee" fill="none">
          <path d="M1 8 H7" strokeWidth="2" />
          <path d="M18.5 5.5 H22.5 V9.5 H18.5 Z M20.5 5 V2.5 H24.5 V7.5 H23" />
          <path d="M36.5 3 L41.5 9 M41.5 3 L36.5 9" strokeWidth="2.4" />
        </svg>
      </header>

      <nav className="flex h-[25px] shrink-0 border-b border-t border-b-black border-t-white pl-[3px] pt-px shadow-[inset_0_-1px_0_#9b9991]">
        {menus.map((m) => (
          <div key={m} className={"flex h-[22px] items-center px-[7.1px] pb-px " + (m === "Exte_nsions" ? "bg-[#4b6983] text-white" : "")}>
            <span><Mn t={m} /></span>
          </div>
        ))}
      </nav>

      <div className="flex h-[36px] w-[1916px] shrink-0 items-center border-b border-r border-t border-b-black border-r-black border-t-white pl-[2px] shadow-[inset_0_-1px_0_#9b9991]">
        <div className="flex w-[710px] items-center overflow-hidden">
          {optGroups.map((g, i) => (
            <React.Fragment key={i}>
              {i > 0 && <span className="mx-[5px] h-[20px] w-[2px] border-l border-r border-l-[#9b9991] border-r-white" />}
              {g.map((ic, j) => (
                <span key={j} className="flex h-[32px] w-[32px] items-center justify-center"><Svg>{ic}</Svg></span>
              ))}
            </React.Fragment>
          ))}
        </div>
        <Spin value="1232.41" cls="h-[21px] w-[61px] text-[11px] tracking-[-0.4px]" />
        <Combo value="px" cls="ml-px h-[26px] w-[51px] pl-[5px] text-[12px]" />
        <span className="mx-[5px] h-[20px] w-[2px] border-l border-r border-l-[#9b9991] border-r-white" />
        {affect.map((a, i) => (
          <div key={i} className={"flex h-[32px] w-[32px] items-center justify-center " + pressed}><Svg s={21}>{a}</Svg></div>
        ))}
      </div>

      <div className="flex h-[905px] shrink-0">
        <aside className="flex w-[34px] flex-col border-b border-r border-b-black border-r-black pl-[2px] pt-px shadow-[inset_-1px_-1px_0_#9b9991,inset_1px_0_0_#fff]">
          {toolIcons.map((ic, i) => (
            <div key={i} className={"flex h-[30.1px] w-[30px] items-center justify-center " + (i === 0 ? pressed : "")}>
              <Svg>{ic}</Svg>
            </div>
          ))}
        </aside>

        <main className="flex w-[1789px] flex-col">
          <HRuler />
          <div className="flex">
            <VRuler />
            <Drawing />
          </div>
          <div className="ml-[18px] mt-px flex h-[15px] w-[1771px] border-t border-[#9b9991]">
            <div className={"flex w-[15px] items-center justify-center " + raised}><Tri dir="l" dim s={8} /></div>
            <div className={"flex-1 " + raised} />
            <div className={"flex w-[15px] items-center justify-center " + raised}><Tri dir="r" s={8} /></div>
          </div>
        </main>

        <div className="flex w-[21px] flex-col items-center pt-[3px]">
          <div className="flex h-[16px] w-[16px] items-center justify-center rounded-[3px] border border-[#999] bg-[#eee]">
            <svg width="8" height="10"><path d="M1.5 2.5 L3.5 1 H6 V9 H3.5 V4 H1.5 Z" fill="#fff" stroke="#888" strokeWidth=".9" /></svg>
          </div>
          <div className="mt-[3px] flex h-[865px] w-[15px] flex-col border-l border-t border-[#9b9991] bg-[#c4c2bd]">
            <div className={"flex h-[15px] items-center justify-center " + raised}><Tri dir="u" s={8} /></div>
            <div className={"mt-[144px] h-[430px] " + raised} />
            <div className={"mt-auto flex h-[15px] items-center justify-center " + raised}><Tri dir="d" s={8} /></div>
          </div>
          <svg width="14" height="14" className="mt-[2px] block">
            <path d="M1 0 L12 8 L4 13 Z" fill="#8a8" />
            <path d="M1 0 L4 13 L7 9 Z" fill="#6fae8a" />
            <path d="M4 13 L12 8 L8 5 Z" fill="#a48aa8" />
          </svg>
        </div>
        <div className="flex w-[7px] items-center justify-center pb-[1px]">
          <div className="mr-px flex flex-col gap-[2px]">
            {Array.from({ length: 8 }, (_, i) => <span key={i} className="h-[2px] w-[2px] bg-black" />)}
          </div>
        </div>

        <aside className="flex w-[37px] flex-col items-center border-b border-l border-r border-b-black border-l-[#9b9991] border-r-black pt-[2px] shadow-[inset_1px_0_0_#fff,inset_-1px_-1px_0_#9b9991]">
          {cmdGroups.map((g, i) => (
            <React.Fragment key={i}>
              {g.map((ic, j) => (
                <div key={j} className="flex h-[32px] w-[32px] items-center justify-center"><Svg>{ic}</Svg></div>
              ))}
              <div className="flex h-[12px] items-center"><HSep /></div>
            </React.Fragment>
          ))}
          <div className="mt-[19px] mr-[2px]"><Tri dir="r" s={10} /></div>
        </aside>

        <aside className="flex w-[32px] flex-col items-center border-b border-r border-black pt-[3px] shadow-[inset_1px_1px_0_#fff,inset_-1px_-1px_0_#9b9991]">
          {snapGroups.map((g, i) => (
            <React.Fragment key={i}>
              {i > 0 && <div className={"flex items-center " + snapGap[i]}><HSep /></div>}
              {g.map((s, j) => (
                <div key={j} className={"flex h-[28px] w-[28px] items-center justify-center " + (s.on ? pressed : "")}><Svg>{s.g}</Svg></div>
              ))}
            </React.Fragment>
          ))}
        </aside>
      </div>

      <div className="flex h-[22px] shrink-0 pt-px">
        <div className="flex h-[19px] w-[1908px] border-b border-t border-b-white border-t-[#9b9991]">
          <div className="flex h-[17px] w-[1907px] border-l border-t border-black pl-px">
            <div className="h-[16px] w-[16px] bg-white">
              <svg width="16" height="16"><path d="M0 0 L16 16 M16 0 L0 16" stroke="#7d1414" strokeWidth="1.5" /></svg>
            </div>
            {palette.map((c, i) => (
              <div key={i} className="h-[16px] w-[16px]" style={{ background: "#" + c }} />
            ))}
          </div>
        </div>
        <div className="pl-px pt-px"><Tri dir="l" s={8} /></div>
      </div>

      <div className="mt-[2px] flex h-[16px] w-[1908px] shrink-0 border-b border-t border-b-white border-t-[#85837c] bg-[#c4c2bd]">
        <div className={"flex w-[15px] items-center justify-center " + raised}><Tri dir="l" dim s={8} /></div>
        <div className={"w-[517px] " + raised} />
        <div className={"ml-auto flex w-[15px] items-center justify-center " + raised}><Tri dir="r" s={8} /></div>
      </div>

      <footer className="flex h-[27px] shrink-0 items-center border-b border-black pl-[2px] text-[11px]">
        <div className="grid w-[122px] grid-cols-[63px_1fr] gap-y-[2px]">
          <span>Fill:</span><b>Unset</b>
          <span>Stroke:</span><b>Unset</b>
        </div>
        <span className="w-[16px] text-[12px]">O:</span>
        <Spin value="0" cls="h-[21px] w-[48px] text-[11px]" dimUp />
        <span className="ml-[2px] mr-[4px] h-[25px] w-[2px] border-l border-r border-l-[#9b9991] border-r-white" />
        <svg width="40" height="16" className="block" fill="none" stroke="#444">
          <path d="M3 8 Q8 2 14 8 Q8 13 3 8 Z M5 5 L4 2 M8 4 V1 M11 5 L13 2" strokeDasharray="1.4 .6" />
          <circle cx="8.5" cy="8" r="2" fill="#444" />
          <path d="M26 8 H34 V14 H26 Z" fill="#cfc9a8" strokeDasharray="1 1" />
          <path d="M28 4 Q31 0 33 4 V8" strokeDasharray="1.4 .6" />
        </svg>
        <Combo value="(root)" cls="h-[26px] w-[92px] pl-[12px]" />
        <span className="ml-[5px] text-[13px]"><b>Group</b> of <b>1</b> object in root. Click selection to toggle scale/rotation handles.</span>
        <span className="ml-auto mr-[3px] h-[25px] w-[2px] border-l border-r border-l-[#9b9991] border-r-white" />
        <div className="grid w-[62px] grid-cols-[auto_1fr] gap-y-[2px]">
          <span>X:</span><span className="text-right font-['DejaVu_Sans_Mono',monospace]">-654.58</span>
          <span>Y:</span><span className="text-right font-['DejaVu_Sans_Mono',monospace]">1638.47</span>
        </div>
        <span className="ml-[10px] mr-[4px] text-[12px]">Z:</span>
        <Spin value="50%" cls="h-[21px] w-[56px]" center />
        <svg width="17" height="18" className="ml-[2px] mt-[6px] block">
          <path d="M1 17 L16 1 M6 17 L16 6 M11 17 L16 11" stroke="#85837c" strokeWidth="1.4" />
          <path d="M2.5 17 L16 2.5 M7.5 17 L16 7.5 M12.5 17 L16 12.5" stroke="#fff" />
        </svg>
      </footer>

      <div className="mt-px flex h-[4px] bg-[#5d5b5d]">
        <span className="ml-[124px] h-full w-[8px] bg-[#e08a2c]" />
        <span className="ml-[14px] h-full w-[14px] bg-[#2a4a8c]" />
        <span className="ml-[14px] h-full w-[38px] border border-black bg-[#8d8b8d]" />
        <span className="ml-[2px] h-full w-[38px] border border-black bg-[#8d8b8d]" />
        <span className="ml-[2px] h-full w-[38px] bg-[#5a86b4]" />
        <span className="ml-[5px] h-full w-[34px] border border-black bg-[#8d8b8d]" />
        <span className="ml-[8px] h-full w-[148px] bg-[#d0cec9]" />
        <span className="ml-auto mr-[28px] h-full w-[14px] bg-[#6aa0c4]" />
        <span className="mr-[54px] h-full w-[36px] bg-[#078007]" />
        <span className="mr-[62px] h-full w-[8px] bg-[#1fd21f]" />
      </div>

      <ExtensionsMenu />
      <div className="absolute left-[702px] top-[148px] z-20 flex h-[25px] w-[183px] items-center border border-black bg-[#dcdad5] pl-[24px] shadow-[inset_1px_1px_0_#fff,inset_-1px_-1px_0_#9b9991]">
        Sheet Metal Conus...
      </div>
      <Dialog />
    </div>
  );
}
